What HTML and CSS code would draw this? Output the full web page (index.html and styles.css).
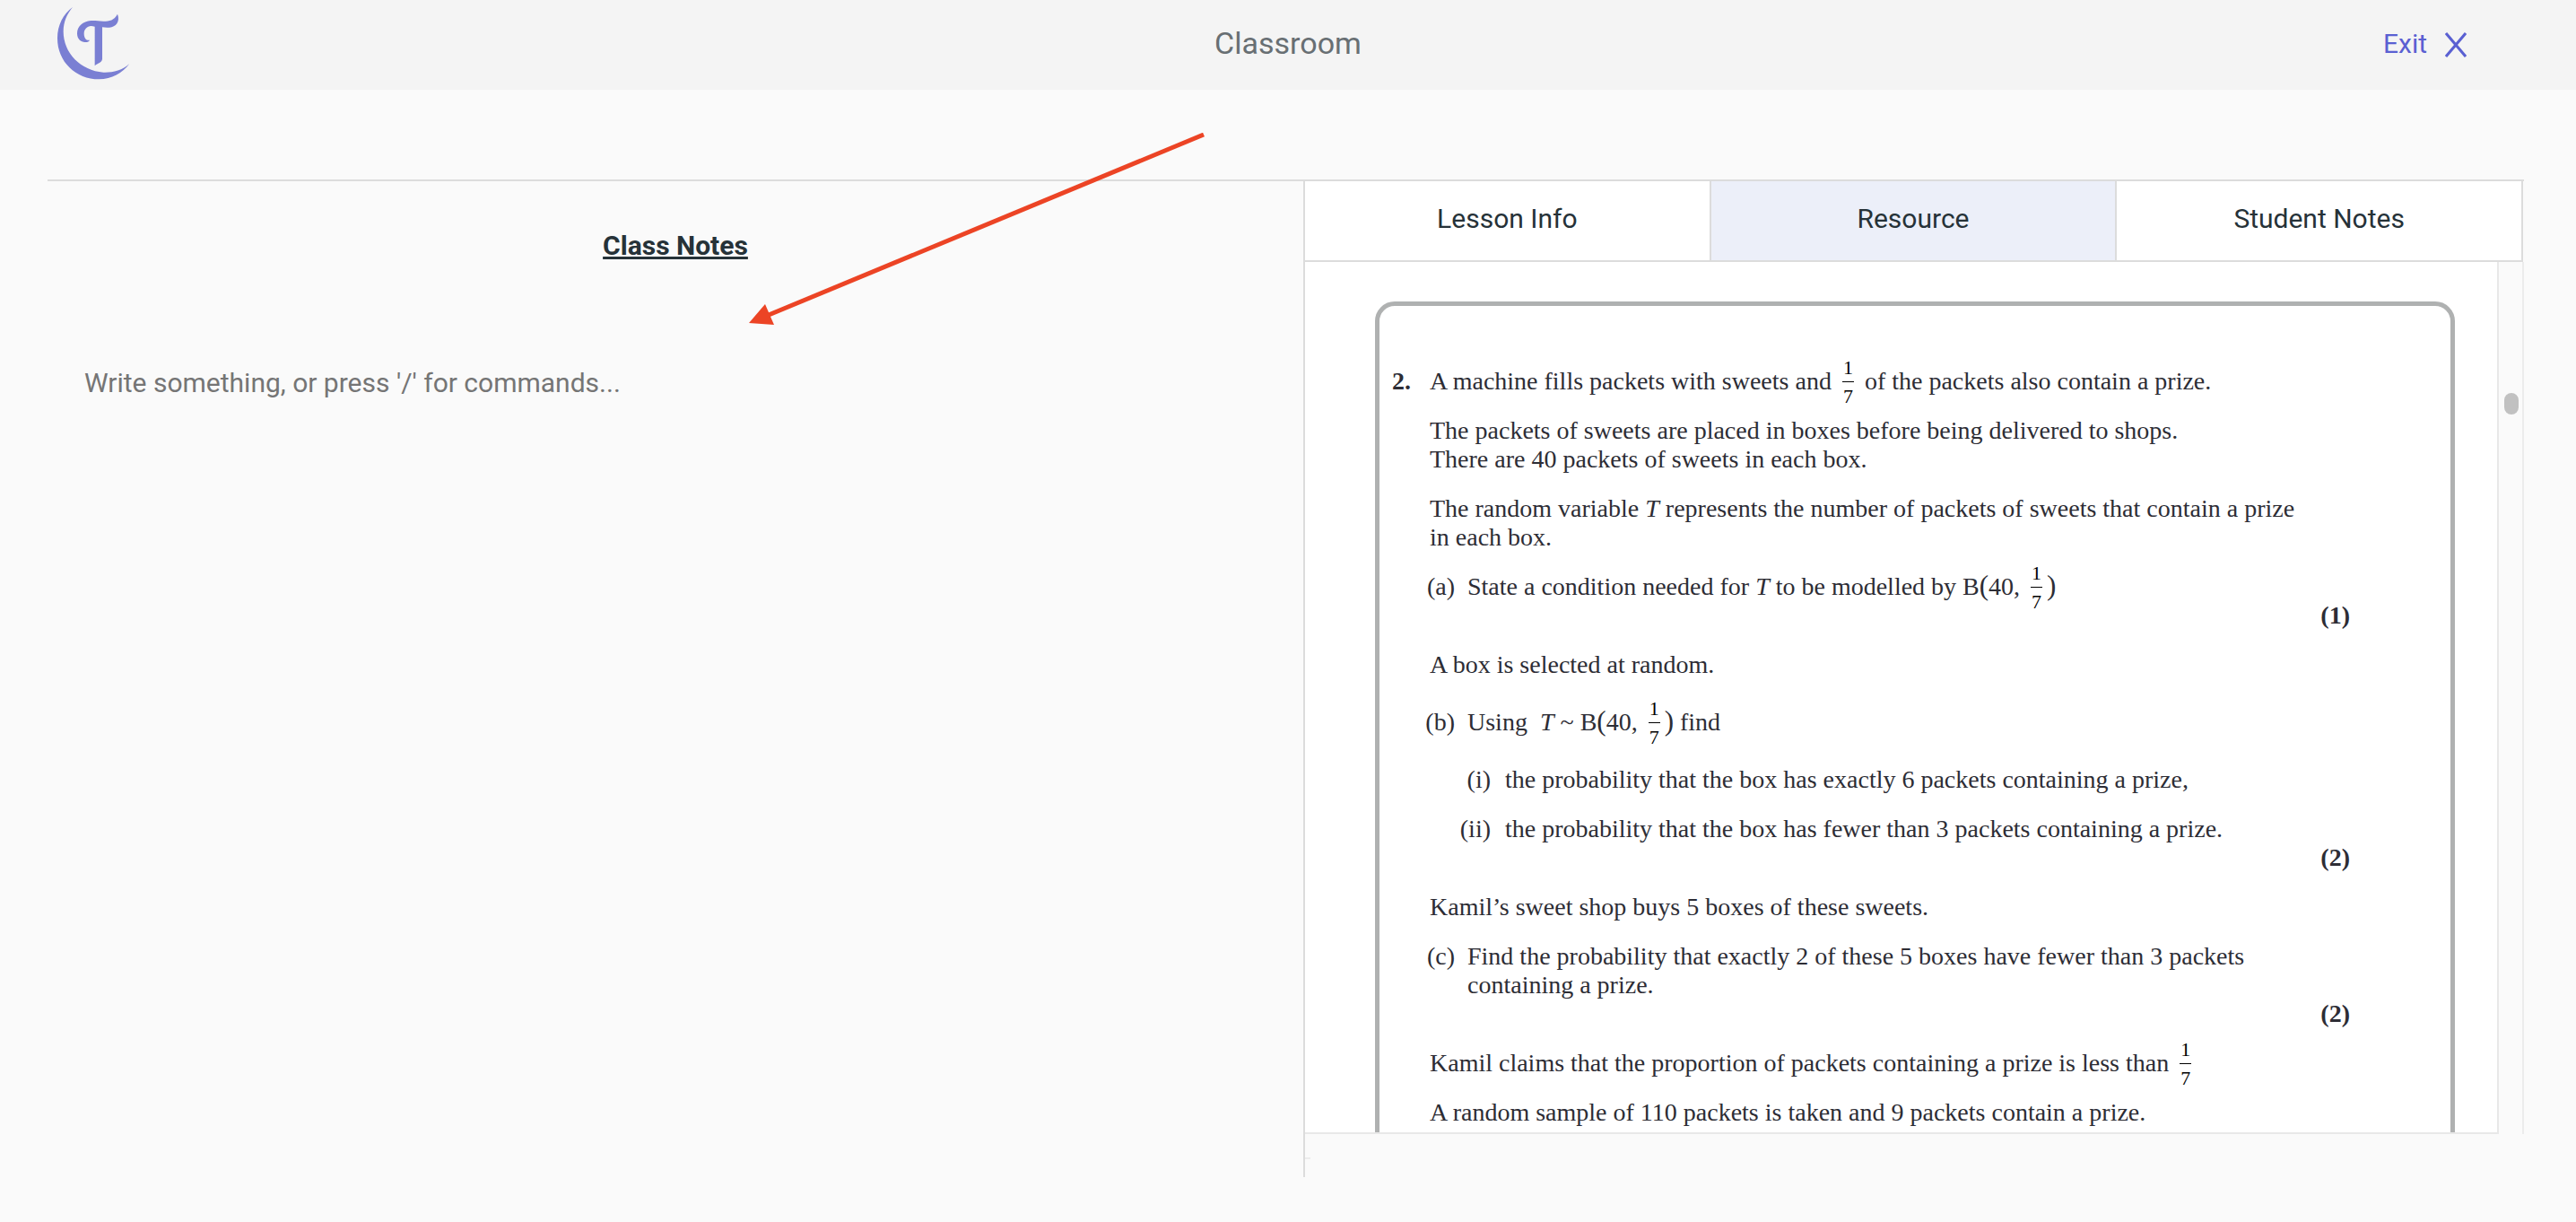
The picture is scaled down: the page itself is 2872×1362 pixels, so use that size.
FILE: index.html
```html
<!DOCTYPE html>
<html lang="en">
<head>
<meta charset="utf-8">
<title>Classroom</title>
<link rel="stylesheet" href="styles.css">
</head>
<body>
<header class="topbar">
  <svg class="logo" viewBox="0 0 420 300" role="img" aria-label="Home">
    <path d="M123 24C92 46 72 84 72 128C72 206 134 265 211 265C254 265 290 244 313 213C289 236 256 243 226 242C150 236 92 178 92 105C92 73 105 45 123 24Z"/>
    <path d="M273 47C262 68 246 71 226 71C210 71 198 68 184 69C157 71 138 88 138 112C138 132 152 142 166 141C173 141 178 138 180 134C169 137 161 127 161 113C161 97 172 88 184 87C189 87 193 88 197 89L197 220C203 212 221 211 222 197L222 91C230 92 237 93 246 92C267 90 283 72 273 47Z"/>
  </svg>
  <h1 class="title">Classroom</h1>
  <button class="exit" type="button"><span class="exit-text">Exit</span>
    <svg class="exit-icon" viewBox="0 0 24 28" aria-hidden="true"><path d="M1 1L23 27M23 1L1 27"/></svg>
  </button>
</header>

<main class="workspace">
  <section class="notes">
    <h2 class="notes-title"><label for="notes">Class Notes</label></h2>
    <textarea id="notes" class="editor" placeholder="Write something, or press '/' for commands..."></textarea>
  </section>

  <section class="panel">
    <nav class="tabs">
      <button class="tab" type="button">Lesson Info</button>
      <button class="tab tab-active" type="button">Resource</button>
      <button class="tab" type="button">Student Notes</button>
    </nav>
    <div class="viewer">
      <div class="sheet">
        <article class="question">
          <div class="number">2.</div>
          <div class="body">
            <p>A machine fills packets with sweets and <span class="frac"><span>1</span><span>7</span></span> of the packets also contain a prize.</p>
            <p>The packets of sweets are placed in boxes before being delivered to shops.<br>There are 40 packets of sweets in each box.</p>
            <p>The random variable <i>T</i> represents the number of packets of sweets that contain a prize<br>in each box.</p>
            <div class="part"><span class="label">(a)</span><p>State a condition needed for <i>T</i> to be modelled by B<span class="paren">(</span>40, <span class="frac"><span>1</span><span>7</span></span><span class="paren">)</span></p></div>
            <div class="marks">(1)</div>
            <p>A box is selected at random.</p>
            <div class="part part-tall"><span class="label">(b)</span><p>Using&nbsp; <i>T</i> ~ B<span class="paren">(</span>40, <span class="frac"><span>1</span><span>7</span></span><span class="paren">)</span> find</p></div>
            <div class="part subpart"><span class="label">(i)</span><p>the probability that the box has exactly 6 packets containing a prize,</p></div>
            <div class="part subpart"><span class="label">(ii)</span><p>the probability that the box has fewer than 3 packets containing a prize.</p></div>
            <div class="marks">(2)</div>
            <p>Kamil’s sweet shop buys 5 boxes of these sweets.</p>
            <div class="part"><span class="label">(c)</span><p>Find the probability that exactly 2 of these 5 boxes have fewer than 3 packets<br>containing a prize.</p></div>
            <div class="marks">(2)</div>
            <p>Kamil claims that the proportion of packets containing a prize is less than <span class="frac"><span>1</span><span>7</span></span></p>
            <p>A random sample of 110 packets is taken and 9 packets contain a prize.</p>
          </div>
        </article>
      </div>
      <div class="track"><div class="thumb"></div></div>
    </div>
    <div class="panel-foot"></div>
  </section>
</main>

<svg class="arrow" viewBox="0 0 508 214" aria-hidden="true">
  <path class="arrow-line" d="M507 2L22 203"/>
  <path class="arrow-head" d="M0 212L18 191L28 214Z"/>
</svg>
</body>
</html>
```

FILE: styles.css
```css
* { box-sizing: border-box; }

body {
  margin: 0;
  height: 100vh;
  display: flex;
  flex-direction: column;
  background: #fafafa;
  color: #263238;
  font-family: Roboto, sans-serif;
  font-size: 30px;
}

h1, h2, p { margin: 0; }

button {
  border: 0;
  padding: 0;
  font: inherit;
  color: inherit;
  cursor: pointer;
}

.topbar {
  flex: none;
  height: 100px;
  display: grid;
  grid-template-columns: 1fr auto 1fr;
  align-items: center;
  background: #f4f4f4;
}

.logo {
  width: 140px;
  height: 100px;
  margin-left: 40px;
  fill: #7a7fd3;
}

.title {
  padding-bottom: 4px;
  font-size: 34px;
  font-weight: 400;
  color: #686f73;
}

.exit {
  justify-self: end;
  margin-right: 122px;
  display: flex;
  align-items: center;
  gap: 20px;
  background: none;
  color: #5a60d2;
}

.exit-text { padding-bottom: 4px; }

.exit-icon {
  width: 24px;
  height: 28px;
  fill: none;
  stroke: currentColor;
  stroke-width: 3;
}

.workspace {
  flex: 1;
  min-height: 0;
  margin: 100px 58px 50px 53px;
  display: grid;
  grid-template-columns: 1400fr 1361fr;
  border-top: 2px solid #dcdcdc;
}

.notes {
  min-height: 0;
  padding: 54px 41px 0;
  display: flex;
  flex-direction: column;
  gap: 117px;
}

.notes-title {
  text-align: center;
  font-size: 30px;
  line-height: 36px;
  font-weight: 700;
  text-decoration: underline;
  text-decoration-thickness: 3px;
}

.editor {
  flex: 1;
  border: 0;
  padding: 0;
  resize: none;
  outline: 0;
  background: none;
  font: inherit;
  line-height: 36px;
  color: inherit;
}

.editor::placeholder { color: #757575; }

.panel {
  min-width: 0;
  min-height: 0;
  display: flex;
  flex-direction: column;
  border-left: 2px solid #dcdcdc;
}

.tabs {
  flex: none;
  height: 90px;
  margin-right: 1px;
  display: grid;
  grid-template-columns: repeat(3, 1fr);
  border-bottom: 2px solid #dcdcdc;
}

.tab {
  padding-bottom: 6px;
  background: #fff;
  border-right: 2px solid #dcdcdc;
}

.tab-active { background: #eceff9; }

.viewer {
  flex: 1;
  min-height: 0;
  display: flex;
  border-right: 2px solid #ececec;
}

.sheet {
  flex: 1;
  padding: 44px 47px 0 78px;
  overflow: hidden;
  background: #fff;
  border-right: 2px solid #e8e8e8;
  border-bottom: 2px solid #e8e8e8;
}

.question {
  padding: 68px 112px 80px 14px;
  display: grid;
  grid-template-columns: 42px 1fr;
  border: 5px solid #afb1b1;
  border-radius: 22px;
  color: #2d2d35;
  font-family: "Liberation Serif", serif;
  font-size: 28px;
  line-height: 32px;
  white-space: nowrap;
}

.number, .marks { font-weight: 700; }

.body > * + * { margin-top: 23px; }

.body > .marks {
  margin-top: 0;
  text-align: right;
}

.part {
  display: grid;
  grid-template-columns: 28px 1fr;
  column-gap: 14px;
}

.part .label { justify-self: end; }

.body > .part-tall { margin: 32px 0; }

.subpart {
  grid-template-columns: 68px 1fr;
  column-gap: 16px;
}

.frac {
  display: inline-flex;
  flex-direction: column;
  align-items: center;
  vertical-align: middle;
  margin: -20px 5px -16px;
  font-size: 22px;
  line-height: 23px;
  color: #000;
}

.frac span { padding: 0 1px 4px; }

.frac span + span {
  border-top: 1px solid #000;
  padding: 4px 1px 0;
}

.paren { font-size: 31px; line-height: 24px; }

.track {
  width: 26px;
  padding: 146px 0 0 2px;
  display: flex;
  justify-content: center;
}

.thumb {
  width: 16px;
  height: 24px;
  border-radius: 8px;
  background: #c1c1c1;
}

.panel-foot {
  flex: none;
  height: 48px;
  padding-top: 26px;
}

.panel-foot::before {
  content: "";
  display: block;
  width: 6px;
  height: 2px;
  background: #ececec;
}

/* Pointer drawn over the page */
.arrow {
  position: absolute;
  left: 835px;
  top: 148px;
  width: 508px;
  height: 214px;
  pointer-events: none;
}

.arrow-line { stroke: #ec4425; stroke-width: 5; }
.arrow-head { fill: #ec4425; }
```
